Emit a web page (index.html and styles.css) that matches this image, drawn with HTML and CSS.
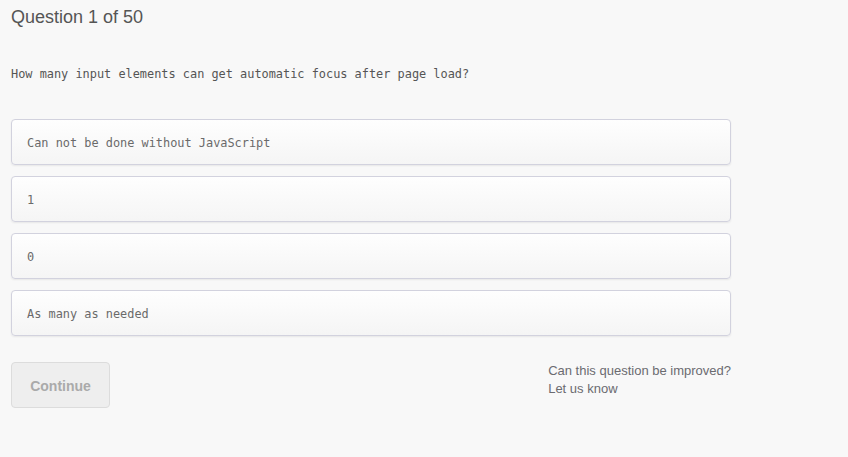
FILE: index.html
```html
<!DOCTYPE html>
<html>
<head>
<meta charset="utf-8">
<link rel="stylesheet" href="styles.css">
</head>
<body>
<div class="quiz">
  <h1 class="title">Question 1 of 50</h1>
  <p class="question">How many input elements can get automatic focus after page load?</p>
  <div class="options">
    <div class="option">Can not be done without JavaScript</div>
    <div class="option">1</div>
    <div class="option">0</div>
    <div class="option">As many as needed</div>
  </div>
  <div class="footer">
    <button class="continue">Continue</button>
    <div class="feedback">Can this question be improved?<br>Let us know</div>
  </div>
</div>
</body>
</html>
```

FILE: styles.css
```css
html, body {
  margin: 0;
  background: #f8f8f8;
}
.quiz {
  width: 720px;
  padding: 6px 0 0 11px;
  font-family: "Liberation Sans", Arial, sans-serif;
}
.title {
  margin: 0;
  font-size: 18px;
  font-weight: normal;
  color: #555;
  line-height: 22px;
}
.question {
  margin: 38px 0 0;
  font-family: "DejaVu Sans Mono", "Liberation Mono", monospace;
  font-size: 11.9px;
  color: #555;
  line-height: 16px;
}
.options {
  margin-top: 37px;
  display: flex;
  flex-direction: column;
  gap: 11px;
}
.option {
  box-sizing: border-box;
  height: 46px;
  border: 1px solid #d2d2de;
  border-radius: 4px;
  background: linear-gradient(#fefefe, #f5f5f5);
  box-shadow: 0 1px 2px rgba(0,0,0,0.07);
  padding: 2px 15px 0;
  display: flex;
  align-items: center;
  font-family: "DejaVu Sans Mono", "Liberation Mono", monospace;
  font-size: 11.9px;
  color: #6a6a6a;
}
.footer {
  margin-top: 26px;
  display: flex;
  justify-content: space-between;
  align-items: flex-start;
}
.continue {
  width: 99px;
  height: 46px;
  border: 1px solid #dcdcdc;
  border-radius: 4px;
  background: #eeeeee;
  color: #aaa;
  font-family: "Liberation Sans", Arial, sans-serif;
  font-weight: bold;
  font-size: 14px;
  padding: 2px 0 0;
}
.feedback {
  font-size: 13px;
  line-height: 18px;
  color: #6b6b70;
}
```
